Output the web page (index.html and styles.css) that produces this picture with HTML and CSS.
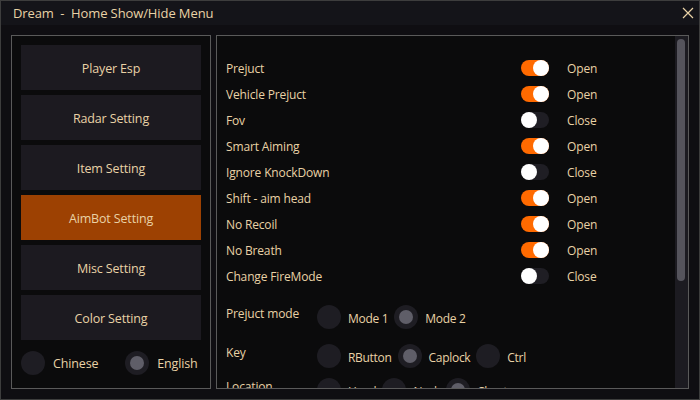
FILE: index.html
```html
<!DOCTYPE html>
<html lang="en">
<head>
    <meta charset="UTF-8">
    <title>Dream - Home Show/Hide Menu</title>
    <link rel="stylesheet" href="styles.css">
</head>
<body>
<div class="window">
    <div class="titlebar">
        <span class="title">Dream&nbsp; - &nbsp;Home Show/Hide Menu</span>
        <svg class="close" width="12" height="12" viewBox="0 0 12 12">
            <path d="M1 1 L11 11 M11 1 L1 11" stroke="#e9d2a6" stroke-width="1.2" fill="none"/>
        </svg>
    </div>

    <div class="main">
        <div class="side">
            <div class="menu-btn">Player Esp</div>
            <div class="menu-btn">Radar Setting</div>
            <div class="menu-btn">Item Setting</div>
            <div class="menu-btn active">AimBot Setting</div>
            <div class="menu-btn">Misc Setting</div>
            <div class="menu-btn">Color Setting</div>
            <div class="lang">
                <span class="radio"></span><span class="lang-name">Chinese</span>
                <span class="radio checked"></span><span class="lang-name">English</span>
            </div>
        </div>

        <div class="content">
            <div class="scroll">
                <div class="toggles" id="toggles"></div>

                <div class="opt-row first">
                    <span class="opt-label">Prejuct mode</span>
                    <span class="radio"></span><span class="opt">Mode 1</span>
                    <span class="radio checked"></span><span class="opt">Mode 2</span>
                </div>
                <div class="opt-row">
                    <span class="opt-label">Key</span>
                    <span class="radio"></span><span class="opt">RButton</span>
                    <span class="radio checked"></span><span class="opt">Caplock</span>
                    <span class="radio"></span><span class="opt">Ctrl</span>
                </div>
                <div class="opt-row last">
                    <span class="opt-label">Location</span>
                    <span class="radio"></span><span class="opt">Head</span>
                    <span class="radio"></span><span class="opt">Neck</span>
                    <span class="radio checked"></span><span class="opt">Chest</span>
                </div>
            </div>
            <div class="scrollbar"><div class="thumb"></div></div>
        </div>
    </div>
</div>

<script>
    const settings = [
        ["Prejuct", true],
        ["Vehicle Prejuct", true],
        ["Fov", false],
        ["Smart Aiming", true],
        ["Ignore KnockDown", false],
        ["Shift - aim head", true],
        ["No Recoil", true],
        ["No Breath", true],
        ["Change FireMode", false]
    ];

    const list = document.getElementById("toggles");
    settings.forEach(([name, on]) => {
        const row = document.createElement("div");
        row.className = "toggle-row";
        row.innerHTML =
            '<span class="toggle-label">' + name + '</span>' +
            '<span class="switch' + (on ? ' on' : '') + '"><span class="knob"></span></span>' +
            '<span class="state">' + (on ? 'Open' : 'Close') + '</span>';
        row.querySelector(".switch").addEventListener("click", function () {
            this.classList.toggle("on");
            row.querySelector(".state").textContent = this.classList.contains("on") ? "Open" : "Close";
        });
        list.appendChild(row);
    });
</script>
</body>
</html>
```

FILE: styles.css
```css
html, body {
    margin: 0;
    padding: 0;
    background: #0f0e12;
}
body {
    font-family: "Open Sans", "Noto Sans", sans-serif;
    font-size: 12px;
    letter-spacing: -0.15px;
    color: #e9d2a6;
}
.window {
    width: 700px;
    height: 400px;
    box-sizing: border-box;
    border: 1px solid #3d3d3d;
    background: #0f0e12;
    display: flex;
    flex-direction: column;
}
.titlebar {
    height: 24px;
    flex: none;
    background: #141419;
    display: flex;
    align-items: center;
    justify-content: space-between;
    padding: 0 5px 0 12px;
}
.title {
    font-size: 13px;
    letter-spacing: -0.1px;
}
.close {
    display: block;
}
.main {
    display: flex;
    gap: 5px;
    padding: 10px;
    flex: 1;
    min-height: 0;
}
.side {
    width: 200px;
    box-sizing: border-box;
    border: 1px solid #5a5a5a;
    background: #0b0b0c;
    padding: 9px;
    display: flex;
    flex-direction: column;
    gap: 5px;
}
.menu-btn {
    height: 45px;
    background: #1c1a20;
    display: flex;
    align-items: center;
    justify-content: center;
    font-size: 12.5px;
    padding-top: 2px;
    box-sizing: border-box;
}
.menu-btn.active {
    background: #9d4102;
}
.lang {
    display: flex;
    align-items: center;
    margin-top: 6px;
}
.lang-name {
    margin: 0 0 0 8px;
    font-size: 12.5px;
}
.lang .lang-name:nth-child(2) {
    margin-right: 27px;
}
.radio {
    width: 24px;
    height: 24px;
    border-radius: 50%;
    background: #1e1d23;
    flex: none;
    position: relative;
}
.radio.checked::after {
    content: "";
    position: absolute;
    left: 5px;
    top: 5px;
    width: 14px;
    height: 14px;
    border-radius: 50%;
    background: #5f5e68;
}
.content {
    flex: 1;
    box-sizing: border-box;
    border: 1px solid #5a5a5a;
    background: #0b0b0c;
    display: flex;
    min-height: 0;
}
.scroll {
    flex: 1;
    overflow: hidden;
    padding: 19px 0 0 9px;
}
.toggle-row {
    height: 26px;
    display: flex;
    align-items: center;
}
.toggle-label {
    width: 295px;
}
.switch {
    width: 28px;
    height: 16px;
    border-radius: 8px;
    background: #1f1e24;
    position: relative;
    margin-right: 18px;
    cursor: pointer;
}
.switch .knob {
    position: absolute;
    left: 0;
    top: 0;
    width: 16px;
    height: 16px;
    border-radius: 50%;
    background: #fff;
}
.switch.on {
    background: #ff6a00;
}
.switch.on .knob {
    left: 12px;
}
.opt-row {
    display: flex;
    align-items: flex-start;
    margin-top: 13px;
}
.opt-row.first {
    margin-top: 16px;
}
.opt-row.last {
    margin-top: 8px;
}
.opt-label {
    width: 91px;
    flex: none;
}
.opt {
    line-height: 24px;
    margin: 2px 6px 0 7px;
    letter-spacing: -0.3px;
}
.scrollbar {
    width: 13px;
    background: #1c1b21;
    padding-top: 3px;
}
.thumb {
    width: 8px;
    height: 242px;
    margin-left: 2px;
    border-radius: 4px;
    background: #55545c;
}
```
